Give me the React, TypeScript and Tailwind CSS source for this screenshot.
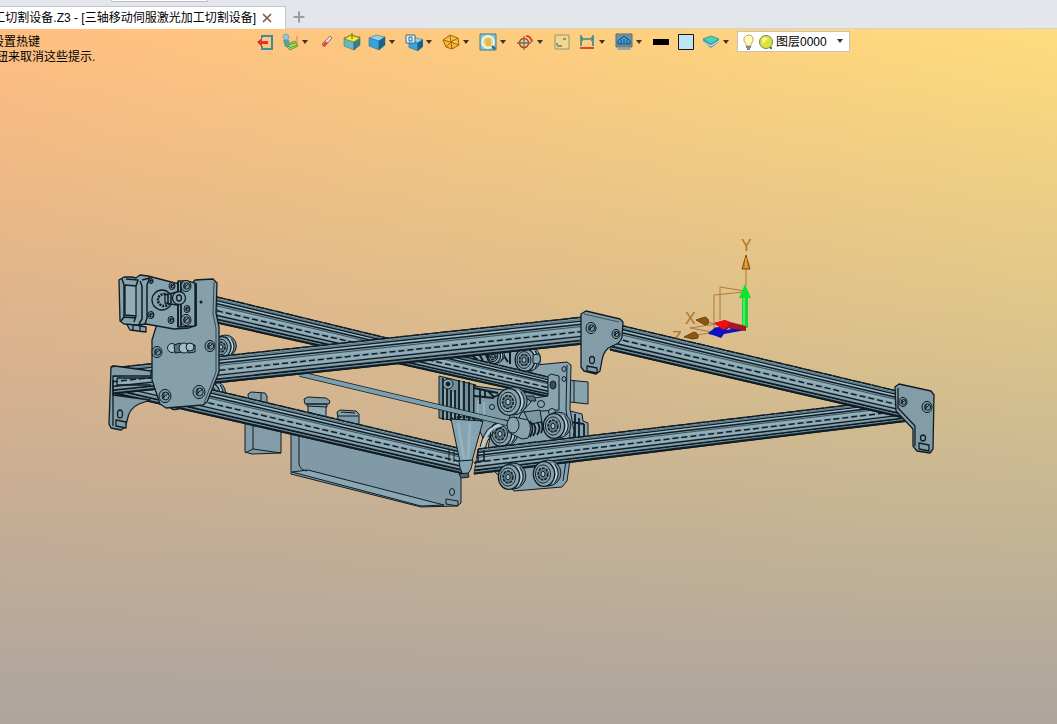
import React from 'react';
import {Plus, X} from "lucide-react";

type Line = { at: number; width: number; color?: string; dash?: string };
type Point = [number, number];

const INK = "#101d24";
const STEEL = "#87a3af";

const railLines: Line[] = [
    {at: 0, width: 1.5, dash: "9 1"},
    {at: 0.08, width: 1, color: "#5a7581"},
    {at: 0.14, width: 1.3},
    {at: 0.2, width: 1, color: "#a5c0cb"},
    {at: 0.26, width: 1.5},
    {at: 0.34, width: 1, color: "#3d545f"},
    {at: 0.42, width: 1.4, color: "#96b2be"},
    {at: 0.53, width: 1.5, dash: "6 3"},
    {at: 0.62, width: 1.4, color: "#96b2be"},
    {at: 0.71, width: 1.4},
    {at: 0.79, width: 1, color: "#7f9ca8"},
    {at: 0.86, width: 1.8},
    {at: 0.92, width: 1, color: "#6d8995"},
    {at: 0.98, width: 2.2},
];

// a, b: ends of the upper edge; c, d: ends of the lower edge
const Rail = ({a, b, c, d}: { a: Point; b: Point; c: Point; d: Point }) => {
    const mix = (p: number, q: number, t: number) => p + (q - p) * t;
    return (
        <g>
            <polygon points={`${a} ${b} ${d} ${c}`} fill={STEEL} stroke={INK}/>
            {railLines.map(l => (
                <line key={l.at}
                      x1={mix(a[0], c[0], l.at)} y1={mix(a[1], c[1], l.at)}
                      x2={mix(b[0], d[0], l.at)} y2={mix(b[1], d[1], l.at)}
                      stroke={l.color ?? INK} strokeWidth={l.width} strokeDasharray={l.dash}/>
            ))}
        </g>
    );
};

const Screw = ({x, y, r = 5}: { x: number; y: number; r?: number }) => (
    <g stroke={INK} fill="none">
        <ellipse cx={x} cy={y} rx={r} ry={r + 0.6} fill="#7a97a4"/>
        <ellipse cx={x + 0.6} cy={y} rx={r * 0.6} ry={r * 0.65}/>
        <path d={`M${x - r * 0.5} ${y + r * 0.4}L${x + r * 0.6} ${y - r * 0.5}M${x - r * 0.2} ${y - r * 0.6}v${r}`}/>
    </g>
);

const Wheel = ({x, y, r = 13}: { x: number; y: number; r?: number }) => (
    <g stroke={INK} fill="none">
        <ellipse cx={x + r * 0.3} cy={y - 1} rx={r} ry={r} fill="#7895a2"/>
        <path d={`M${x + r * 0.6} ${y - r * 0.8}q${r * 0.7} ${r * 0.8} 0 ${r * 1.5}`} stroke="#c5dae2" strokeWidth="1.4"/>
        <path d={`M${x + r * 0.85} ${y - r * 0.75}q${r * 0.5} ${r * 0.75} 0 ${r * 1.4}`}/>
        <ellipse cx={x} cy={y} rx={r * 0.82} ry={r * 0.95} fill={STEEL} strokeWidth="1.3"/>
        <ellipse cx={x - 1} cy={y} rx={r * 0.58} ry={r * 0.7}/>
        <ellipse cx={x - 1} cy={y} rx={r * 0.38} ry={r * 0.46} fill="#5d7883" strokeWidth="1.5" strokeDasharray="3 1"/>
        <ellipse cx={x - 1} cy={y} rx={r * 0.16} ry={r * 0.2} fill="#a9c1cb"/>
    </g>
);

const Machine = () => (
    <g strokeLinejoin="round">
        {/* wheels behind the left carriage */}
        <Wheel x={222} y={347} r={11}/>
        <Wheel x={210} y={394} r={12}/>
        <Wheel x={175} y={400} r={10}/>

        {/* boxes under the front rail */}
        <g fill="#829da9" stroke={INK}>
            <path d="M248 394l3-2 14 1 2 3v10h-18zM261 393v9"/>
            <path d="M245 420l7-2 29 8v27l-29 1-7-2z"/>
            <path d="M253 420v29l-8 4M253 449l28 4" fill="none"/>
            <path d="M308 403h18v14l-18-5z" fill="#8eabb7"/>
            <path d="M304 399l4-2 18 1 4 3-1 3h-24zM307 404h20v3l-20-1z"/>
            <path d="M337 412l3-2 16 1 3 3v16l-20-6zM337 416h21M341 412l14 1"/>
            <path d="M291 428v46l130 33 36-1 4-3v-35z" fill="#809ba7"/>
            <path d="M292 472l16-2 136 35-23 1z" fill="#8ba7b3"/>
            <path d="M299 433v31q1 6 8 7M446 499l12 2v5l-12-2z" fill="none"/>
            <ellipse cx="452" cy="492" rx="2.5" ry="3.5"/>
        </g>

        <Rail a={[112, 366]} b={[462, 449]} c={[112, 393]} d={[464, 474]}/>
        <path d="M449 450v11M454 451v11" stroke={INK}/>

        {/* centre carriage */}
        <g stroke={INK} fill={STEEL}>
            <path d="M568 380l20 2v22l-18-2zM574 381v22"/>
            <path d="M570 411l12 3 1 7 5 2v14l-20 3z"/>
            <path d="M575 414v24M579 418v20M584 424v12M570 422l14 2" strokeWidth="1.8"/>
            <path d="M536 365l31-3 4 3-1 44 4 22-7 50-5 6-48 4-8-8-20-20 6-40z"/>
            <path d="M567 365l-1 45 4 24-7 47" fill="none"/>
            <ellipse cx="564" cy="369" rx="2" ry="2.5"/>
            <ellipse cx="564" cy="379" rx="2" ry="2.5"/>
            <path d="M460 352l70-6 8 14-10 14-66-14z"/>
            <path d="M470 354l8 6M478 352l5 9M484 351l5 10M494 351l-6 10M500 350l8 12M510 350v14" strokeWidth="2"/>
        </g>
        <Wheel x={494} y={356} r={8}/>
        <Wheel x={525} y={360} r={12}/>
        <path d="M533 355l5-1q5 5 0 10l-5-1z" fill={STEEL} stroke={INK}/>

        <Rail a={[217, 297]} b={[548, 377]} c={[217, 323]} d={[548, 397]}/>

        <g stroke={INK} fill={STEEL}>
            <path d="M548 376l3-2 8 2v34l-52 3-5-10 46-7z"/>
            <ellipse cx="553" cy="385" rx="3" ry="4" fill="#35505c"/>
            <path d="M439 376l37 9v39l-37-6z" fill="#718e9a"/>
            <path d="M443 378v42M447 378v42M451 390v31M455 390v31M459 380v42M464 381v41M469 382v40M474 384v38" strokeWidth="1.8"/>
            <path d="M445 378v41M453 392v28M461 381v40" stroke="#a7c0ca"/>
            <circle cx="448" cy="384" r="5"/>
            <circle cx="448" cy="384" r="2" fill={INK}/>
            <path d="M474 386l30 4 9 8v30l-30 10-9-20z" fill="#7f9ba8"/>
            <path d="M474 388l24 5M480 390v14M485 390v8M474 396l20 2M488 391l6 6 8-4" strokeWidth="1.8"/>
            <path d="M478 400v20M484 402v18" stroke="#a7c0ca"/>
            <circle cx="492" cy="407" r="2.5"/>
            <path d="M520 396h14l2 5h-16z" fill="#56717d"/>
            <circle cx="541" cy="404" r="3.5"/>
            <circle cx="552" cy="412" r="3.5"/>
            <path d="M524 402l4-3 3 3-9 10-10 18-7-2 6-14z"/>
            <path d="M524 412l16-2 2 12-12 2z" fill="#7a97a4"/>
        </g>
        <Wheel x={509} y={402} r={14}/>
        <Wheel x={501} y={434} r={13}/>
        <Wheel x={554} y={426} r={13}/>
        <g stroke={INK} fill={STEEL}>
            <path d="M514 417l14 3q5 8 0 18l-6 1-14-7z"/>
            <path d="M530 421q5 7 0 16M533 423q5 6 0 13M537 422q5 6 0 13M541 421q3 6 0 12" fill="none" strokeWidth="1.8"/>
            <path d="M482 449q4-22 21-25" fill="none" stroke="#b6cdd6" strokeWidth="2.5"/>
            <path d="M480 447q4-22 22-25M485 449q4-18 19-23" fill="none"/>
        </g>

        <Rail a={[478, 449]} b={[900, 399]} c={[474, 474]} d={[908, 421]}/>
        <path d="M478 450v13M484 450v12M474 463l11-3" stroke={INK} strokeWidth="1.5"/>
        <Wheel x={509} y={477} r={13}/>
        <Wheel x={544} y={474} r={13}/>

        {/* drive shaft and laser nozzle */}
        <path d="M300 374L515 425" stroke={INK} strokeWidth="5.6"/>
        <path d="M300 374L515 425" stroke="#7d9eac" strokeWidth="4.2"/>
        <ellipse cx="513" cy="425" rx="6" ry="8" fill={STEEL} stroke={INK}/>
        <g stroke={INK} fill="#85a3b0">
            <path d="M451 419l32 2-11 40-12 1z"/>
            <path d="M458 423l6 36M470 423l-2 36" stroke="#93b1be" strokeWidth="3"/>
            <path d="M451 419q15-5 31 2" fill="none" strokeDasharray="2 1" strokeWidth="2"/>
            <path d="M459 461l14-1-2 9-4 6h-4l-3-7z"/>
            <path d="M459 474l9-1 1 4-8 1z" fill="#4e6874"/>
        </g>

        <Rail a={[112, 368]} b={[584, 317]} c={[112, 394]} d={[584, 344]}/>
        <Rail a={[619, 325]} b={[897, 391]} c={[610, 350]} d={[908, 419]}/>

        {/* corner brackets */}
        <g stroke={INK} fill="#829ca8" strokeWidth="1.3">
            <path d="M586 311l34 8 3 3-1 15q-1 6-10 9-8 3-10 14l-2 11-4 3-12-3-3-4V314z"/>
            <path d="M587 366l10 2v5l-10-2z"/>
            <path d="M584 314l35 8" strokeWidth=".6"/>
            <path d="M899 384l32 7 3 4-1 54-3 4-13-2-4-5v-17l-17-18-1-24z"/>
            <path d="M919 443l10 2v6l-10-2z"/>
            <path d="M898 388v20l17 18v20" fill="none"/>
            <path d="M111 367l4-1 36 5v5h-38v19l37 5-11 4q-10 4-12 17l-2 6-4 3-10-2-2-4z"/>
            <path d="M116 420l10 2v6l-10-2zM113 380v46"/>
            <path d="M117 378h34M117 385h34M117 378v9" fill="none"/>
            <ellipse cx="120" cy="414" rx="2.5" ry="4"/>
            <ellipse cx="592" cy="360" rx="2.5" ry="3.5"/>
            <ellipse cx="923" cy="438" rx="2.5" ry="3"/>
        </g>
        <Screw x={591} y={328} r={5}/>
        <Screw x={616} y={334} r={4}/>
        <Screw x={903} y={402} r={4}/>
        <Screw x={927} y={407} r={5}/>

        {/* left carriage plate and motor */}
        <path d="M195 280l18-1 4 4-1 30 3 14v45l-12 30-4 3-37 3-6-4-8-24v-40l5-16z" fill="#859fab" stroke={INK} strokeWidth="1.3"/>
        <path d="M214 282l-1 32 3 14v44l-12 31" fill="none" stroke={INK} strokeWidth=".7"/>
        <circle cx="201" cy="302" r="1.5" fill={INK}/>
        <Screw x={157} y={352}/>
        <Screw x={210} y={346}/>
        <Screw x={165} y={396} r={6}/>
        <Screw x={199} y={392} r={6}/>
        <g stroke={INK} fill="#a5bdc7">
            <circle cx="172" cy="348" r="4.5"/>
            <path d="M174 345l6-2 3 3v6l-8 1z" fill="#59747f"/>
            <circle cx="184" cy="348" r="5"/>
            <path d="M187 344l8 1v7l-7 1z" fill="#70909d"/>
            <circle cx="190" cy="347" r="4"/>
        </g>
        <g stroke={INK} fill={STEEL} strokeWidth="1.3">
            <path d="M126 323l20 4v5l-16-2zM133 325v5M140 326v5"/>
            <path d="M119 280l5-3h8l4 1 4-3 8 1 27 7 20 2v41l-6 2-15 1-28-5-9 1-13-1-4-3z"/>
            <path d="M125 285l11 1v30l-11-1z" fill="#91adb8"/>
            <path d="M122 279l2 6v32l-3 4M126 279l12 1-2 6M136 316l-2 6M140 281l2 5v33l-3 5M142 280l8-2M150 277l-3 8v33l-2 6M124 317l12 1" fill="none" strokeWidth="1.5"/>
            <path d="M178 281h10l7 2v43l-17 1z"/>
            <path d="M178 282v45M181 282v44M196 283v43" strokeWidth="1.8"/>
            <circle cx="162" cy="300" r="10"/>
            <circle cx="164" cy="300" r="6" strokeDasharray="2 1" strokeWidth="2.5"/>
            <path d="M165 295l12-3v13l-12-2z"/>
            <path d="M168 295v8M171 294v9" strokeWidth="1.6"/>
            <circle cx="179" cy="298" r="6.5"/>
            <ellipse cx="179" cy="298" rx="2.5" ry="3"/>
        </g>
        <Screw x={151} y={281} r={2}/>
        <Screw x={151} y={315} r={3}/>
        <Screw x={172} y={286} r={3}/>
        <Screw x={171} y={320} r={3}/>
        <Screw x={186} y={286} r={5}/>
        <Screw x={187} y={309} r={3}/>
        <Screw x={186} y={320} r={5}/>
    </g>
);

const AxisTriad = () => (
    <g>
        <g fill="none" stroke="#b07b38">
            <path d="M746 286v-22M745 291l-25-4v33M744 292l-30 3v34M718 325l-14-4M690 328l40-6M690 328l22 4M698 335l16-3"/>
        </g>
        <g fill="#ae7326" fontFamily="Liberation Sans, Arial, sans-serif" fontSize="16">
            <text x="741" y="251">Y</text>
            <text x="685" y="324">X</text>
            <text x="672" y="343">Z</text>
        </g>
        <path d="M746 255l4 14h-8z" fill="#d3881e" stroke="#7e4e0e"/>
        <path d="M746 258v10" stroke="#f0b45c"/>
        <path d="M696 320l9-3q5 2 3 7l-3 1z" fill="#8d5710" stroke="#6e430c"/>
        <path d="M684 337l10-5q5 1 4 6l-5 1z" fill="#8d5710" stroke="#6e430c"/>
        <path d="M742 297h6v31h-6z" fill="#18d63a"/>
        <path d="M744 297v31" stroke="#8bff91"/>
        <path d="M745 284l6 14h-12z" fill="#0be52b"/>
        <path d="M746 328l-16 1v-2l-12 9-10-2 12-8 8 1z" fill="#1616ca"/>
        <path d="M746 330l-2-3-18 3-10-3-8 6 13 5 3-4z" fill="#1010c4"/>
        <path d="M746 331v-5l-16-4-5-2-11 3 8 6 8-1z" fill="#a8171f"/>
        <path d="M714 323l11-3 5 3-6 7z" fill="#f20d14"/>
    </g>
);

const Cube = ({top = "#8fd0ef", front = "#3aa3d8", side = "#14638f"}: { top?: string; front?: string; side?: string }) => (
    <g stroke="#24627f" strokeWidth=".5">
        <path d="M1 5l7-3 9 2-6 4z" fill={top}/>
        <path d="M1 5l10 3v9L1 13z" fill={front}/>
        <path d="M11 8l6-4v8l-6 5z" fill={side}/>
    </g>
);

type Tool = { label: string; menu?: boolean; icon: React.ReactNode };

const tools: Tool[] = [
    {
        label: "退出", icon: <>
            <path d="M6 5V3h10v13H6v-3" fill="none" stroke="#3a8f9a" strokeWidth="2"/>
            <path d="M1 9l5-4v3h6v3H6v3z" fill="#d8392c"/>
        </>
    },
    {
        label: "基准面", menu: true, icon: <>
            <path d="M4 12l5 5 8-4-3-5z" fill="#b5da62" stroke="#5a9e2f"/>
            <path d="M6 12l9-2M8 15l8-3" stroke="#5a9e2f"/>
            <path d="M16 3v9" stroke="#d9873e"/>
            <path d="M2 7h6l1 7H4z" fill="#5ea08f"/>
            <circle cx="5" cy="4" r="3" fill="#8fc3df" stroke="#4b8aa8" strokeWidth=".5"/>
        </>
    },
    {
        label: "擦除", icon: <>
            <path d="M12 3l2 2-7 8-3-2z" fill="#e9ddd8" stroke="#8d7068"/>
            <path d="M7 8l3 2-3 4-3-1z" fill="#df4d46"/>
        </>
    },
    {
        label: "草图", icon: <>
            <Cube top="#f2e93d" front="#67b9c5" side="#32808f"/>
            <path d="M1 6l7-4 9 3-6 4z" fill="#f4e83a" stroke="#8e8724"/>
            <path d="M9 0v6" stroke="#5b6d1b"/>
        </>
    },
    {label: "着色", menu: true, icon: <Cube/>},
    {
        label: "视图", menu: true, icon: <>
            <g transform="translate(3 3) scale(.88)"><Cube/></g>
            <path d="M1 2h9v8H1z" fill="#e4f1f8" stroke="#2b6f96"/>
            <path d="M4 4h3v4H4z" fill="none" stroke="#315f80"/>
        </>
    },
    {
        label: "线框", menu: true,
        icon: <path d="M1 7l7-5 8 3 1 7-7 4-6-2zM1 7l8 2 7-4M9 9l1 7M9 9l-5 5M8 2l1 7 8 3" fill="#f8b72d" stroke="#a56305"/>
    },
    {
        label: "缩放", menu: true, icon: <>
            <path d="M1 1h16v16H1z" fill="#8bc2c8" stroke="#348396"/>
            <circle cx="9" cy="9" r="6" fill="#f2d778" stroke="#e8f4f4" strokeWidth="2"/>
            <path d="M6 6l6-1v8H7z" fill="#e2bc4e"/>
            <path d="M13 13l3 3" stroke="#365e6b" strokeWidth="2"/>
        </>
    },
    {
        label: "定位", menu: true, icon: <>
            <circle cx="8" cy="10" r="4.5" fill="none" stroke="#b9392c" strokeWidth="1.5"/>
            <path d="M8 3v14M1 10h14" stroke="#5b7776" strokeWidth="1.3"/>
            <path d="M10 3q5 0 6 6" fill="none" stroke="#d9412e" strokeWidth="2"/>
        </>
    },
    {
        label: "窗口", icon: <>
            <path d="M2 2h14v14H2z" fill="#f5d58c" stroke="#8c9875"/>
            <path d="M4 13h5M4 10v2M10 6h3" stroke="#4c8583" strokeWidth="1.5"/>
        </>
    },
    {
        label: "标注", menu: true, icon: <>
            <path d="M3 2v11M15 2v11M3 6h12" stroke="#348995" strokeWidth="1.6"/>
            <path d="M5 4L3 6l2 2M13 4l2 2-2 2" fill="none" stroke="#348995"/>
            <path d="M2 15h14" stroke="#d44934" strokeWidth="2"/>
        </>
    },
    {
        label: "显示", menu: true, icon: <>
            <path d="M1 1h16v13H1z" fill="#718fa5" stroke="#596e7c"/>
            <path d="M3 11q-1-5 3-5 3-5 6 0 4 0 3 5z" fill="#3fa3df" stroke="#0c4770"/>
            <path d="M6 7v3M9 6v4M12 7v3" stroke="#12466c"/>
            <path d="M3 15h12l1 2H2z" fill="#96a9b2"/>
        </>
    },
    {label: "线宽", icon: <path d="M1 6h16v6H1z" fill="#000"/>},
    {label: "颜色", icon: <path d="M1.5 1.5h15v15h-15z" fill="#bde4f2" stroke="#171717"/>},
    {
        label: "图层", menu: true, icon: <>
            <path d="M1 9l8 6 8-6V6H1z" fill="#5d9fb0"/>
            <path d="M1 9l8 4 8-5" stroke="#d5eae6" fill="none"/>
            <path d="M1 6l8-3 8 3-8 5z" fill="#4fd0b6" stroke="#429b95"/>
        </>
    },
];

const Caret = () => (
    <svg className="size-[6px]" viewBox="0 0 6 6" aria-hidden="true">
        <path d="M0 1h6L3 5z" fill="#3f3423"/>
    </svg>
);

const Toolbar = () => (
    <div className="flex h-[21px] items-center">
        {tools.map(t => (
            <button key={t.label} aria-label={t.label}
                    className={`flex h-5 shrink-0 items-center gap-[3px] ${t.menu ? "w-[37px]" : "w-[25px]"}`}>
                <svg className="size-[18px]" viewBox="0 0 18 18" aria-hidden="true">{t.icon}</svg>
                {t.menu && <Caret/>}
            </button>
        ))}
        <div className="relative -ml-0.5 flex h-[21px] w-[113px] shrink-0 items-center border border-[#c9c4b8] bg-white pl-1">
            <svg className="h-4 w-[34px] shrink-0" viewBox="0 0 34 16" aria-hidden="true">
                <path d="M4 10Q1 7 2 4q2-3 5-3t4 3q1 3-2 6v2H4z" fill="#fffbc5" stroke="#c9ad3c"/>
                <path d="M4 13h5M5 15h3" stroke="#536478" strokeWidth="1.5"/>
                <circle cx="24" cy="8" r="6.5" fill="#dbe33b" stroke="#6a876b"/>
                <path d="M20 5q3-3 6-1l-5 6z" fill="#fbf98c"/>
                <path d="M28 13h2v2h-2z" fill="#546d61"/>
            </svg>
            <select aria-label="当前图层" className="h-full w-full appearance-none bg-transparent text-xs text-black outline-none">
                <option>图层0000</option>
            </select>
            <span className="pointer-events-none absolute top-1.5 right-1.5 flex"><Caret/></span>
        </div>
    </div>
);

const TabStrip = () => (
    <header className="relative flex h-[29px] shrink-0 items-end border-b border-[#d5d3d0] bg-[#e3e6ea]">
        <div className="absolute top-0 left-[111px] h-0.5 w-[97px] rounded-b border border-t-0 border-[#b9bdc2] bg-white"/>
        <div className="-mb-px flex h-[23px] w-[286px] items-center justify-end overflow-hidden border-t border-r border-[#c2c6ca] bg-white pr-[11px]">
            <a href="#file" className="shrink-0 whitespace-nowrap text-black">工切割设备.Z3 - [三轴移动伺服激光加工切割设备]</a>
            <button aria-label="关闭" className="ml-1 text-[#7d6148]">
                <X className="size-[14px]" strokeWidth={3}/>
            </button>
        </div>
        <button aria-label="新建" className="mb-[3px] ml-[5px] text-[#9a9da0]">
            <Plus className="size-4" strokeWidth={3}/>
        </button>
    </header>
);

export default function App() {
    return (
        <div className="flex min-h-screen flex-col overflow-hidden font-['Liberation_Sans','Noto_Sans_CJK_SC',sans-serif] text-xs">
            <TabStrip/>
            <main className="relative flex-1 bg-[linear-gradient(to_bottom,rgba(173,165,158,0),rgba(173,165,158,1)),linear-gradient(to_right,#ffbe80,#ffdc7d)]">
                <svg className="absolute inset-0 h-full w-full" viewBox="0 29 1057 695" role="img" aria-label="三轴移动伺服激光加工切割设备">
                    <AxisTriad/>
                    <Machine/>
                </svg>
                <div className="relative flex items-start pt-0.5">
                    <div className="w-64 shrink-0 overflow-hidden pt-1 leading-[15px] text-black">
                        <p className="-ml-2">设置热键</p>
                        <p className="-ml-1">钮来取消这些提示.</p>
                    </div>
                    <Toolbar/>
                </div>
            </main>
        </div>
    );
}
